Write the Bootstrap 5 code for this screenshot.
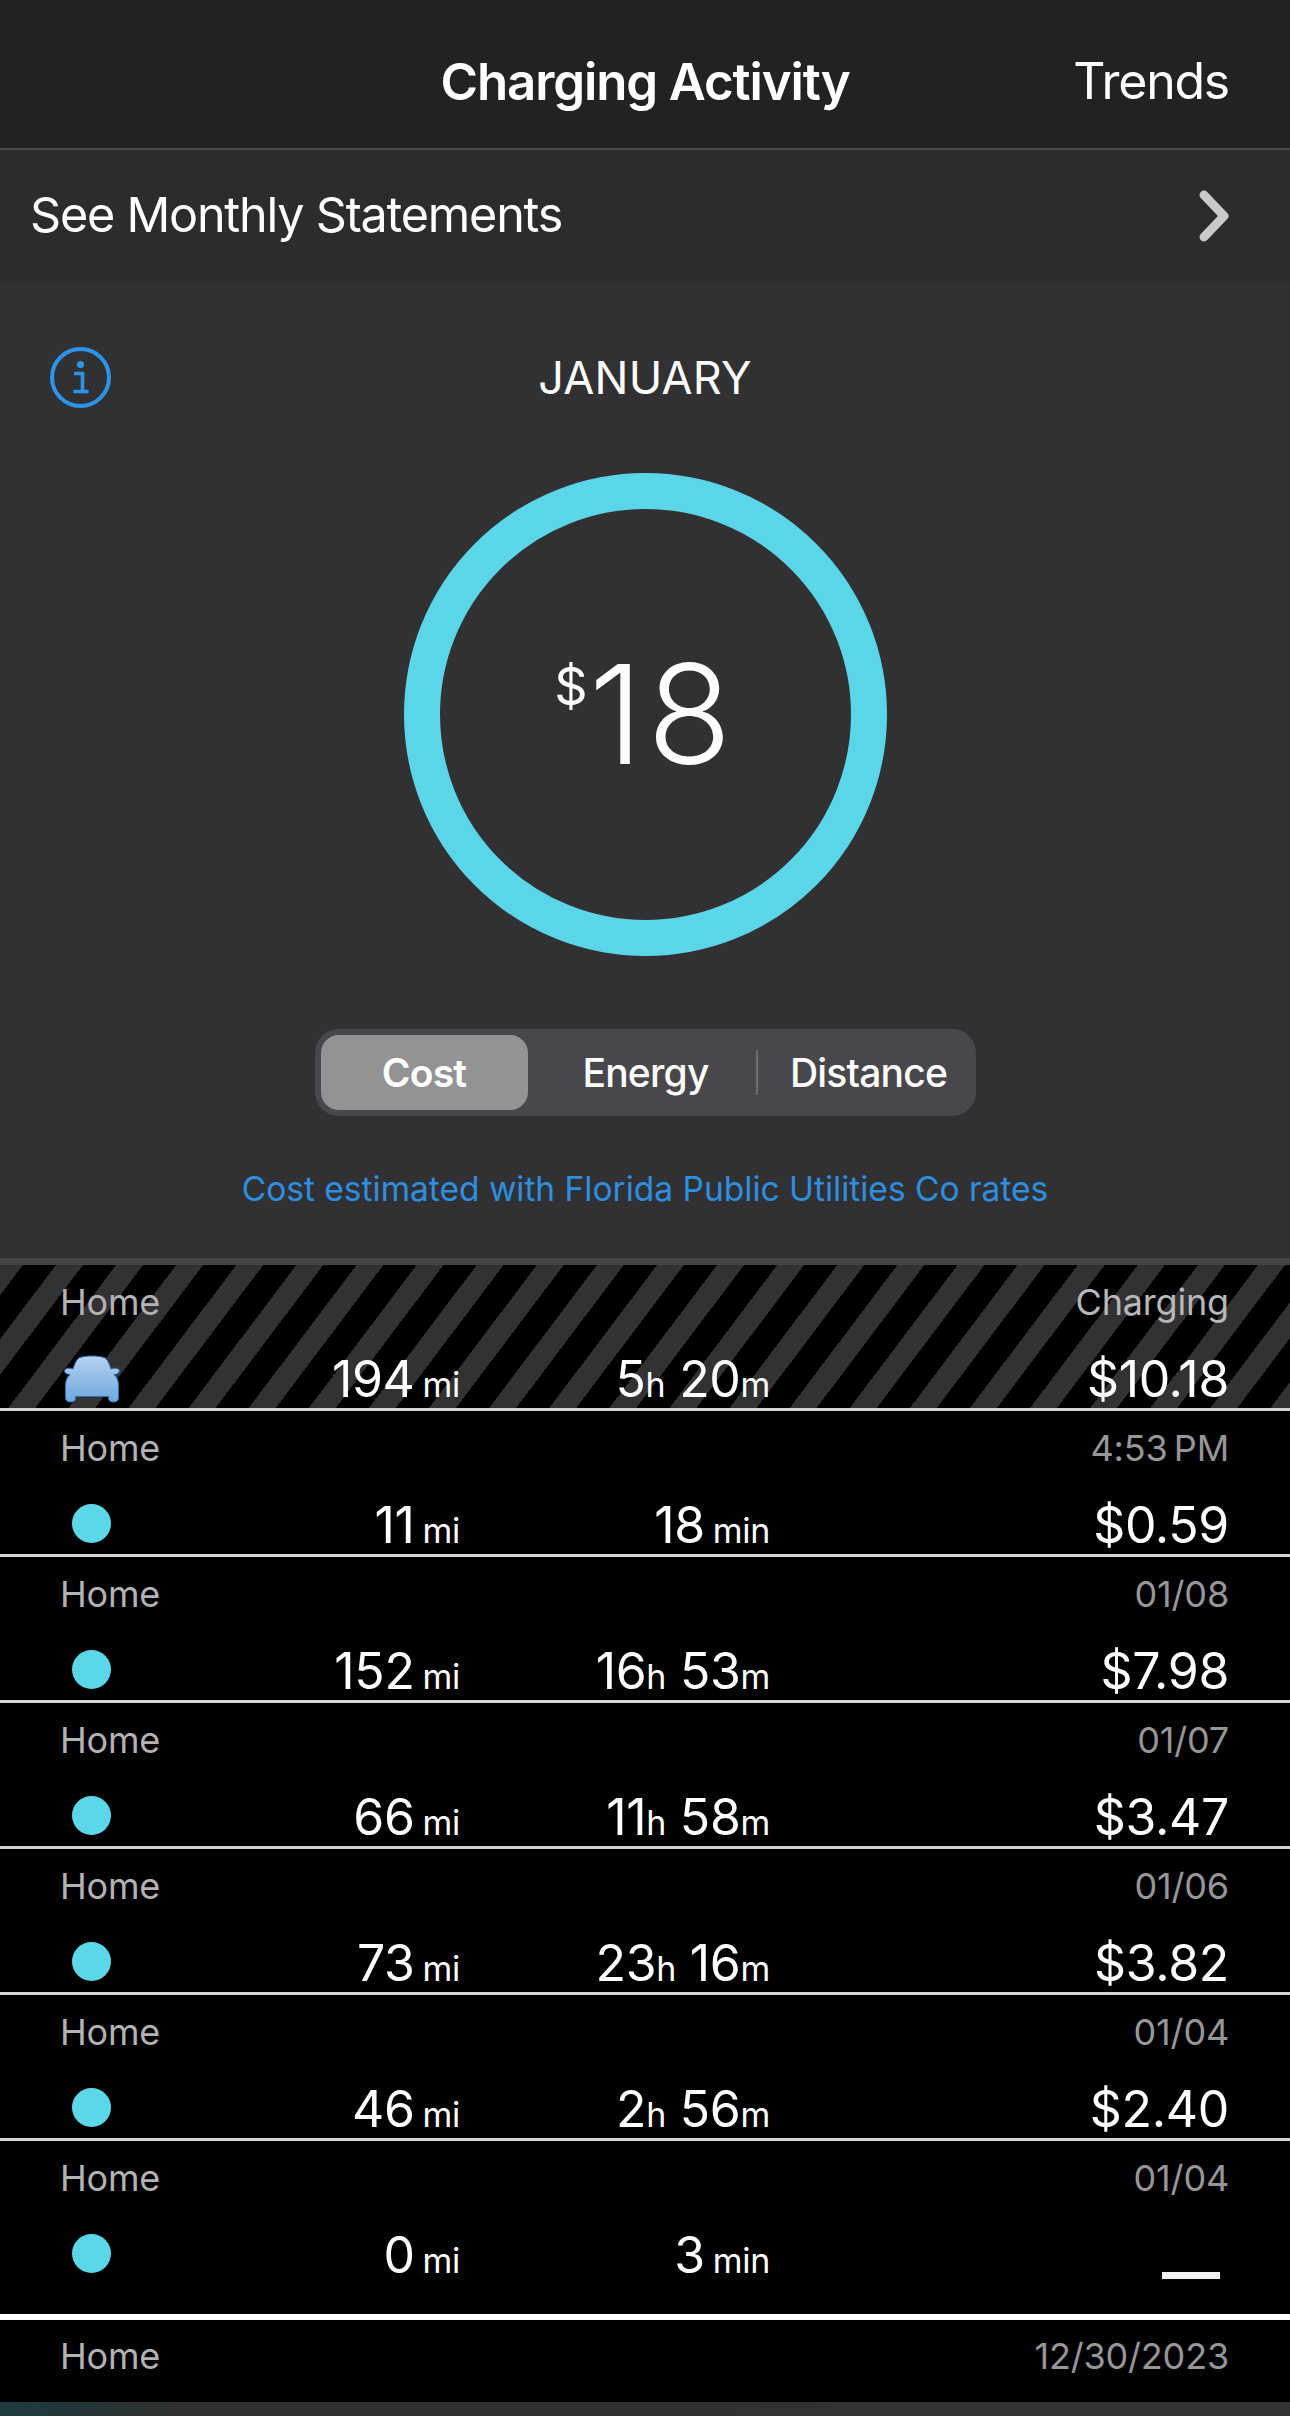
<!doctype html>
<html lang="en">
<head>
<meta charset="utf-8">
<title>Charging Activity</title>
<link href="https://cdn.jsdelivr.net/npm/bootstrap@5.3.0/dist/css/bootstrap.min.css" rel="stylesheet">
<style>
html,body{background:#000;}
body{width:1290px;margin:0;font-family:Inter,"Liberation Sans",sans-serif;color:#fff;letter-spacing:-.02em;}
.app-head{height:150px;background:#222221;border-bottom:2px solid #4a4a48;padding:14px 61px 0 30px;}
.app-title{font-size:51px;font-weight:600;line-height:1;margin:0;color:#fff;letter-spacing:-.022em;}
.app-link{font-size:50px;color:#fff;text-decoration:none;letter-spacing:-.025em;}
.head-title-wrap{left:0;right:0;top:14px;bottom:0;}
.statements{height:131px;background:#2c2c2b;padding:0 60px 0 30px;font-size:48.5px;color:#fff;text-decoration:none;letter-spacing:-.025em;}
.panel{height:977px;background:#313134;padding-top:65px;}
.panel-top{height:62px;padding-left:50px;}
.month{left:0;right:0;top:0;bottom:0;font-size:45px;font-weight:400;line-height:1;margin:0;letter-spacing:.005em;}
.gauge{width:483px;height:483px;border:36px solid #5bd6e8;margin-top:65px;}
.gauge-value{font-size:138px;font-weight:300;line-height:1;letter-spacing:.03em;margin-top:-2px;}
.gauge-cur{font-size:52px;font-weight:400;line-height:1;align-self:flex-start;margin:14px 1px 0 0;letter-spacing:0;}
.seg{width:661px;height:87px;background:#48484c;border-radius:24px;padding:6px;margin-top:73px;}
.seg-btn{flex:none;font-size:39px;font-weight:500;color:#fff;border:0;border-radius:18px;padding:0;height:75px;line-height:75px;letter-spacing:-.02em;}
.seg-btn:hover,.seg-btn:active{color:#fff;}
.seg-cost,.seg-cost:hover{width:207px;background:#939396;font-weight:600;}
.seg-energy{width:228px;padding-left:8px;}
.seg-dist{flex:1;padding-left:10px;}
.seg-sep{width:2px;height:45px;background:#6d6d70;}
.estimate{font-size:33.5px;color:#2d8fe0;text-decoration:none;margin-top:53px;line-height:40px;letter-spacing:0;}
.top-band{height:7px;background:#454547;}
.entries{border:0;border-radius:0;}
.entry{height:143px;padding:15px 61px 0 60px;background:#000;border:0;border-bottom:0;border-radius:0!important;color:#fff;}
.entry-sep{height:3px;background:#d4d4d4;}
.entry-sep-thick{height:6px;background:#fff;}
.entry-tall{height:173px;}
.entry-last{height:82px;padding-top:14px;}
.charging{background:repeating-linear-gradient(127deg,#323235 0,#323235 18.2px,#000 18.2px,#000 44.7px,#323235 44.7px,#323235 48px);}
.line-top{height:44px;line-height:44px;font-size:36px;letter-spacing:-.005em;}
.place{color:#b2b2b2;}
.stamp{color:#969696;}
.charging .stamp{color:#b8b8b8;}
.line-main{height:56px;line-height:56px;margin-top:27px;font-size:50px;}
.cell-icon{width:63px;height:56px;}
.cell-mi{width:337px;}
.cell-time{width:310px;}
.unit{font-size:34px;}
.unit-gap{margin-left:8px;}
.dot{width:39px;height:39px;background:#5cd7e8;margin-top:-4px;}
.dash{width:58px;height:7px;background:#f2f2f2;margin:45px 9px 0 0;}
.footer-strip{height:14px;background:linear-gradient(90deg,#1d3a3f 0,#2f2f2f 14%,#333 100%);}
</style>
</head>
<body>
<header class="app-head position-relative d-flex align-items-center justify-content-end">
  <div class="head-title-wrap position-absolute d-flex align-items-center justify-content-center">
    <h1 class="app-title">Charging Activity</h1>
  </div>
  <a class="app-link position-relative" href="#">Trends</a>
</header>
<a class="statements d-flex align-items-center justify-content-between" href="#">
  <span>See Monthly Statements</span>
  <svg width="32" height="54" viewBox="0 0 32 54" aria-hidden="true"><path d="M6 6 L26 27 L6 48" fill="none" stroke="#c9c9c9" stroke-width="9" stroke-linecap="round" stroke-linejoin="round"/></svg>
</a>
<section class="panel d-flex flex-column align-items-center">
  <div class="panel-top position-relative w-100 d-flex align-items-center">
    <div class="month position-absolute d-flex align-items-center justify-content-center">JANUARY</div>
    <svg class="position-relative" width="61" height="61" viewBox="0 0 61 61" aria-hidden="true">
      <circle cx="30.5" cy="30.5" r="28.5" fill="none" stroke="#2b95ec" stroke-width="4"/>
      <circle cx="30.5" cy="17.5" r="3.6" fill="#2b95ec"/>
      <path d="M24 26.500h8.500v17.500M23.500 44.500h15" fill="none" stroke="#2b95ec" stroke-width="3.6"/>
    </svg>
  </div>
  <div class="gauge rounded-circle d-flex align-items-center justify-content-center">
    <div class="d-flex">
      <span class="gauge-cur">$</span><span class="gauge-value">18</span>
    </div>
  </div>
  <div class="seg d-flex align-items-center" role="group">
    <button type="button" class="btn seg-btn seg-cost">Cost</button>
    <button type="button" class="btn seg-btn seg-energy">Energy</button>
    <span class="seg-sep"></span>
    <button type="button" class="btn seg-btn seg-dist">Distance</button>
  </div>
  <a class="estimate" href="#">Cost estimated with Florida Public Utilities Co rates</a>
</section>
<div class="top-band"></div>
<div class="list-group entries">
  <div class="list-group-item entry charging">
    <div class="line-top d-flex justify-content-between"><span class="place">Home</span><span class="stamp">Charging</span></div>
    <div class="line-main d-flex">
      <div class="cell-icon d-flex align-items-center justify-content-center">
        <svg width="58" height="48" viewBox="0 0 58 48" aria-hidden="true">
          <defs><linearGradient id="carfill" x1="0" y1="0" x2="0" y2="1"><stop offset="0" stop-color="#b5d3ef"/><stop offset="1" stop-color="#6fa6de"/></linearGradient></defs>
          <path d="M17 2.500 C23 .5 35 .5 41 2.500 C44 3.500 46 8 48 14 C50 13 54 12.500 56 14.500 C57.500 17 55 19.500 51 19.500 C54 22 55.500 26 55.500 30 V43 C55.500 46 53 47 50.500 47 C47.500 47 45.500 46 45.500 43 V41.500 H12.500 V43 C12.500 46 10.500 47 7.500 47 C5 47 2.500 46 2.500 43 V30 C2.500 26 4 22 7 19.500 C3 19.500 .5 17 2 14.500 C4 12.500 8 13 10 14 C12 8 14 3.500 17 2.500 Z" fill="url(#carfill)" stroke="#2f6da8" stroke-width="1"/>
        </svg>
      </div>
      <div class="cell-mi text-end">194<span class="unit unit-gap">mi</span></div>
      <div class="cell-time text-end">5<span class="unit">h</span> 20<span class="unit">m</span></div>
      <div class="flex-grow-1 text-end">$10.18</div>
    </div>
  </div>
  <div class="entry-sep"></div>
  <div class="list-group-item entry">
    <div class="line-top d-flex justify-content-between"><span class="place">Home</span><span class="stamp">4:53&#8201;PM</span></div>
    <div class="line-main d-flex">
      <div class="cell-icon d-flex align-items-center justify-content-center"><span class="dot rounded-circle"></span></div>
      <div class="cell-mi text-end">11<span class="unit unit-gap">mi</span></div>
      <div class="cell-time text-end">18<span class="unit unit-gap">min</span></div>
      <div class="flex-grow-1 text-end">$0.59</div>
    </div>
  </div>
  <div class="entry-sep"></div>
  <div class="list-group-item entry">
    <div class="line-top d-flex justify-content-between"><span class="place">Home</span><span class="stamp">01/08</span></div>
    <div class="line-main d-flex">
      <div class="cell-icon d-flex align-items-center justify-content-center"><span class="dot rounded-circle"></span></div>
      <div class="cell-mi text-end">152<span class="unit unit-gap">mi</span></div>
      <div class="cell-time text-end">16<span class="unit">h</span> 53<span class="unit">m</span></div>
      <div class="flex-grow-1 text-end">$7.98</div>
    </div>
  </div>
  <div class="entry-sep"></div>
  <div class="list-group-item entry">
    <div class="line-top d-flex justify-content-between"><span class="place">Home</span><span class="stamp">01/07</span></div>
    <div class="line-main d-flex">
      <div class="cell-icon d-flex align-items-center justify-content-center"><span class="dot rounded-circle"></span></div>
      <div class="cell-mi text-end">66<span class="unit unit-gap">mi</span></div>
      <div class="cell-time text-end">11<span class="unit">h</span> 58<span class="unit">m</span></div>
      <div class="flex-grow-1 text-end">$3.47</div>
    </div>
  </div>
  <div class="entry-sep"></div>
  <div class="list-group-item entry">
    <div class="line-top d-flex justify-content-between"><span class="place">Home</span><span class="stamp">01/06</span></div>
    <div class="line-main d-flex">
      <div class="cell-icon d-flex align-items-center justify-content-center"><span class="dot rounded-circle"></span></div>
      <div class="cell-mi text-end">73<span class="unit unit-gap">mi</span></div>
      <div class="cell-time text-end">23<span class="unit">h</span> 16<span class="unit">m</span></div>
      <div class="flex-grow-1 text-end">$3.82</div>
    </div>
  </div>
  <div class="entry-sep"></div>
  <div class="list-group-item entry">
    <div class="line-top d-flex justify-content-between"><span class="place">Home</span><span class="stamp">01/04</span></div>
    <div class="line-main d-flex">
      <div class="cell-icon d-flex align-items-center justify-content-center"><span class="dot rounded-circle"></span></div>
      <div class="cell-mi text-end">46<span class="unit unit-gap">mi</span></div>
      <div class="cell-time text-end">2<span class="unit">h</span> 56<span class="unit">m</span></div>
      <div class="flex-grow-1 text-end">$2.40</div>
    </div>
  </div>
  <div class="entry-sep"></div>
  <div class="list-group-item entry entry-tall">
    <div class="line-top d-flex justify-content-between"><span class="place">Home</span><span class="stamp">01/04</span></div>
    <div class="line-main d-flex">
      <div class="cell-icon d-flex align-items-center justify-content-center"><span class="dot rounded-circle"></span></div>
      <div class="cell-mi text-end">0<span class="unit unit-gap">mi</span></div>
      <div class="cell-time text-end">3<span class="unit unit-gap">min</span></div>
      <div class="flex-grow-1 d-flex justify-content-end"><span class="dash"></span></div>
    </div>
  </div>
  <div class="entry-sep-thick"></div>
  <div class="list-group-item entry entry-last">
    <div class="line-top d-flex justify-content-between"><span class="place">Home</span><span class="stamp">12/30/2023</span></div>
  </div>
</div>
<div class="footer-strip"></div>
<script src="https://cdn.jsdelivr.net/npm/bootstrap@5.3.0/dist/js/bootstrap.bundle.min.js"></script>
</body>
</html>
